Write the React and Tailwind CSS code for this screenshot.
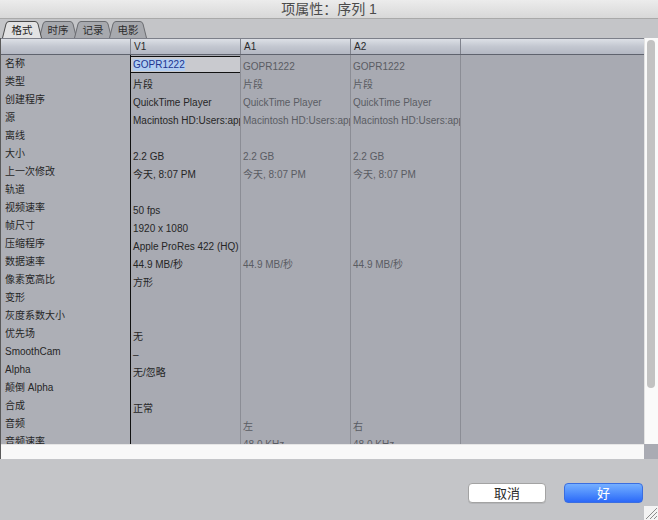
const FONT = { fontFamily: '"Liberation Sans", "Noto Sans CJK SC", sans-serif' };

const rows = [
  { label: '名称', v1: 'GOPR1222', a1: 'GOPR1222', a2: 'GOPR1222', box: true },
  { label: '类型', v1: '片段', a1: '片段', a2: '片段' },
  { label: '创建程序', v1: 'QuickTime Player', a1: 'QuickTime Player', a2: 'QuickTime Player' },
  { label: '源', v1: 'Macintosh HD:Users:app', a1: 'Macintosh HD:Users:app', a2: 'Macintosh HD:Users:app' },
  { label: '离线' },
  { label: '大小', v1: '2.2 GB', a1: '2.2 GB', a2: '2.2 GB' },
  { label: '上一次修改', v1: '今天, 8:07 PM', a1: '今天, 8:07 PM', a2: '今天, 8:07 PM' },
  { label: '轨道' },
  { label: '视频速率', v1: '50 fps' },
  { label: '帧尺寸', v1: '1920 x 1080' },
  { label: '压缩程序', v1: 'Apple ProRes 422 (HQ)' },
  { label: '数据速率', v1: '44.9 MB/秒', a1: '44.9 MB/秒', a2: '44.9 MB/秒' },
  { label: '像素宽高比', v1: '方形' },
  { label: '变形' },
  { label: '灰度系数大小' },
  { label: '优先场', v1: '无' },
  { label: 'SmoothCam', v1: '–' },
  { label: 'Alpha', v1: '无/忽略' },
  { label: '颠倒 Alpha' },
  { label: '合成', v1: '正常' },
  { label: '音频', a1: '左', a2: '右' },
  { label: '音频速率', a1: '48.0 KHz', a2: '48.0 KHz' },
];

const tabs = ['格式', '时序', '记录', '电影'];

function Tab({ label, active, first }) {
  return (
    <div
      className={`relative h-[17px] flex items-center justify-center ${first ? 'w-[40px] z-10' : 'w-[38px] -ml-[3px]'}`}
    >
      <svg className="absolute inset-0" width={first ? 40 : 38} height="17" viewBox={`0 0 ${first ? 40 : 38} 17`}>
        <path
          d={first
            ? 'M0.5 17 L4 3 Q4.8 0.5 7 0.5 L33 0.5 Q35.2 0.5 36 3 L39.5 17'
            : 'M0.5 17 L4 3 Q4.8 0.5 7 0.5 L31 0.5 Q33.2 0.5 34 3 L37.5 17'}
          fill={active ? '#e2e2e3' : '#a7a9ae'}
          stroke={active ? '#4a4a4a' : '#6a6c70'}
          strokeWidth="1"
        />
      </svg>
      <span className={`relative text-[10.5px] pt-[2px] ${active ? 'text-[#222]' : 'text-[#2c2c2c]'}`}>{label}</span>
    </div>
  );
}

function ValueCol({ field, first, dim }) {
  return (
    <div className={`w-[110px] shrink-0 flex flex-col ${first ? 'border-l border-[#111]' : 'border-l border-[#8b8d95]'}`}>
      {rows.map((r, i) =>
        r.box && first ? (
          <div key={i} className="h-[18px] shrink-0 pt-[1px]">
            <div className="h-[17px] -ml-[1px] mr-[-1px] border border-[#111] bg-[#c9cacf] px-[2px] flex items-center">
              <span className="text-[10px] leading-[12px] text-[#22358f] bg-[#b2cdf0]">{r[field]}</span>
            </div>
          </div>
        ) : (
          <div
            key={i}
            className={`h-[18px] shrink-0 pl-[2px] pt-[6px] leading-[12px] whitespace-nowrap overflow-hidden text-[10px] ${dim ? 'text-[#5a5c63]' : 'text-[#262626]'}`}
          >
            {r[field] || ''}
          </div>
        )
      )}
    </div>
  );
}

export default function App() {
  return (
    <div className="w-[658px] h-[520px] bg-[#c4c5c8] flex flex-col overflow-hidden" style={FONT}>
      {/* Title bar */}
      <div className="h-[19px] shrink-0 bg-gradient-to-b from-[#ececec] to-[#d8d8d8] border-b border-[#a9a9a9] flex items-center justify-center">
        <span className="text-[14px] text-[#4b4b4b] leading-none">项属性：序列 1</span>
      </div>

      {/* Tabs */}
      <div className="h-[19px] shrink-0 flex items-end pl-[2px]">
        {tabs.map((t, i) => (
          <Tab key={t} label={t} active={i === 0} first={i === 0} />
        ))}
      </div>

      {/* Table box */}
      <div className="h-[421px] shrink-0 flex border-l border-[#5a5a5a]">
        <div className="flex-1 flex flex-col min-w-0">
          {/* Header */}
          <div className="h-[17px] shrink-0 flex bg-gradient-to-b from-[#dde0e6] via-[#c3c7d0] to-[#b4b8c3] border-t border-[#7d808a] border-b border-b-[#5f636e] text-[10px] text-[#2a2a2a]">
            <div className="w-[129px] shrink-0" />
            <div className="w-[110px] shrink-0 border-l border-[#80838d] pl-[3px] flex items-center">V1</div>
            <div className="w-[110px] shrink-0 border-l border-[#80838d] pl-[3px] flex items-center">A1</div>
            <div className="w-[110px] shrink-0 border-l border-[#80838d] pl-[3px] flex items-center">A2</div>
            <div className="flex-1 border-l border-[#80838d]" />
          </div>

          {/* Body */}
          <div className="flex-1 flex overflow-hidden bg-[#a8aab2]">
            <div className="w-[129px] shrink-0 flex flex-col bg-[#adafb6]">
              {rows.map((r, i) => (
                <div key={i} className="h-[18px] shrink-0 pl-[4px] pb-[2px] flex items-center whitespace-nowrap text-[10px] text-[#262626]">
                  {r.label}
                </div>
              ))}
            </div>
            <ValueCol field="v1" first />
            <ValueCol field="a1" dim />
            <ValueCol field="a2" dim />
            <div className="flex-1 border-l border-[#8b8d95]" />
          </div>

          {/* Horizontal scroll track */}
          <div className="h-[15px] shrink-0 bg-[#f8f8f8] border-t border-[#e6e6e6]" />
        </div>

        {/* Vertical scrollbar */}
        <div className="w-[14px] shrink-0 flex flex-col">
          <div className="flex-1 bg-[#fafafa] border-l border-[#e3e3e3] px-[2px] pt-[2px]">
            <div className="w-[8px] h-[348px] rounded-full bg-[#c2c2c2]" />
          </div>
          <div className="h-[15px] shrink-0 bg-[#a9abb3]" />
        </div>
      </div>

      {/* Bottom buttons */}
      <div className="flex-1 flex items-start justify-end pt-[24px] pr-[15px] gap-[18px] relative">
        <button className="w-[78px] h-[20px] rounded-[4px] bg-white border border-[#a3a3a3] shadow-[0_1px_0_rgba(0,0,0,0.08)] text-[13px] text-[#2a2a2a] leading-none flex items-center justify-center">
          取消
        </button>
        <button className="w-[79px] h-[20px] rounded-[4px] bg-gradient-to-b from-[#75afff] to-[#2c68f8] border border-[#3a6ee0] text-[13px] text-white leading-none flex items-center justify-center">
          好
        </button>
        <svg className="absolute right-0 bottom-0" width="14" height="14" viewBox="0 0 14 14">
          <rect width="14" height="14" fill="#f3f3f3" />
          <path d="M2 13 L13 2 M6 13 L13 6 M10 13 L13 10" stroke="#8c8c8c" strokeWidth="1" />
        </svg>
      </div>
    </div>
  );
}
